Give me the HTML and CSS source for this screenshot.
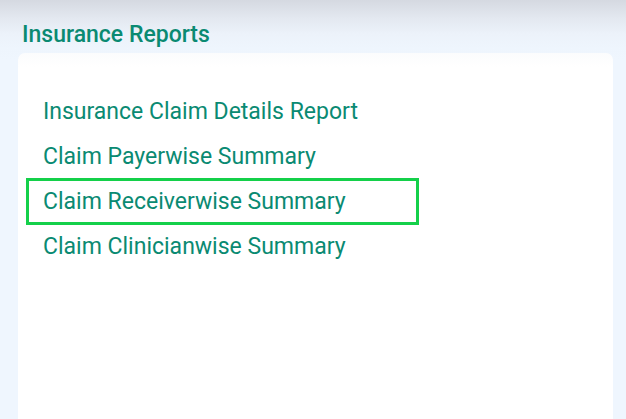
FILE: index.html
```html
<!DOCTYPE html>
<html>
<head>
<meta charset="utf-8">
<link rel="stylesheet" href="styles.css">
</head>
<body>
<div class="page">
  <h2 class="title">Insurance Reports</h2>
  <div class="card">
    <ul class="links">
      <li><a class="link">Insurance Claim Details Report</a></li>
      <li><a class="link">Claim Payerwise Summary</a></li>
      <li><a class="link focused">Claim Receiverwise Summary</a></li>
      <li><a class="link">Claim Clinicianwise Summary</a></li>
    </ul>
  </div>
</div>
</body>
</html>
```
FILE: styles.css
```css
html, body {
  margin: 0;
  padding: 0;
  height: 100%;
}
body {
  background: linear-gradient(to bottom, #d5d9e1 0px, #e3e8f0 18px, #ecf2fa 34px, #eef5fd 48px, #eff6fe 60px);
  font-family: Roboto, "Liberation Sans", sans-serif;
  overflow: hidden;
}
.page {
  height: 100%;
  box-sizing: border-box;
  padding: 21px 13px 0 18px;
  display: flex;
  flex-direction: column;
}
.title {
  margin: 0 0 5px 4px;
  font-size: 23px;
  font-weight: 500;
  line-height: 27px;
  color: #0a8a72;
}
.card {
  flex: 1;
  background: linear-gradient(to bottom, #fbfcfd 0px, #ffffff 14px);
  border-radius: 7px 7px 0 0;
  padding-top: 36px;
}
.links {
  list-style: none;
  margin: 0;
  padding: 0 0 0 8px;
}
.links li {
  height: 45px;
  display: flex;
  align-items: center;
}
.link {
  display: block;
  box-sizing: border-box;
  width: 393px;
  font-size: 23px;
  line-height: 41px;
  color: #0a8a72;
  padding: 0 0 0 14px;
  border: 3px solid transparent;
}
.focused {
  border-color: #14d04a;
}
```
